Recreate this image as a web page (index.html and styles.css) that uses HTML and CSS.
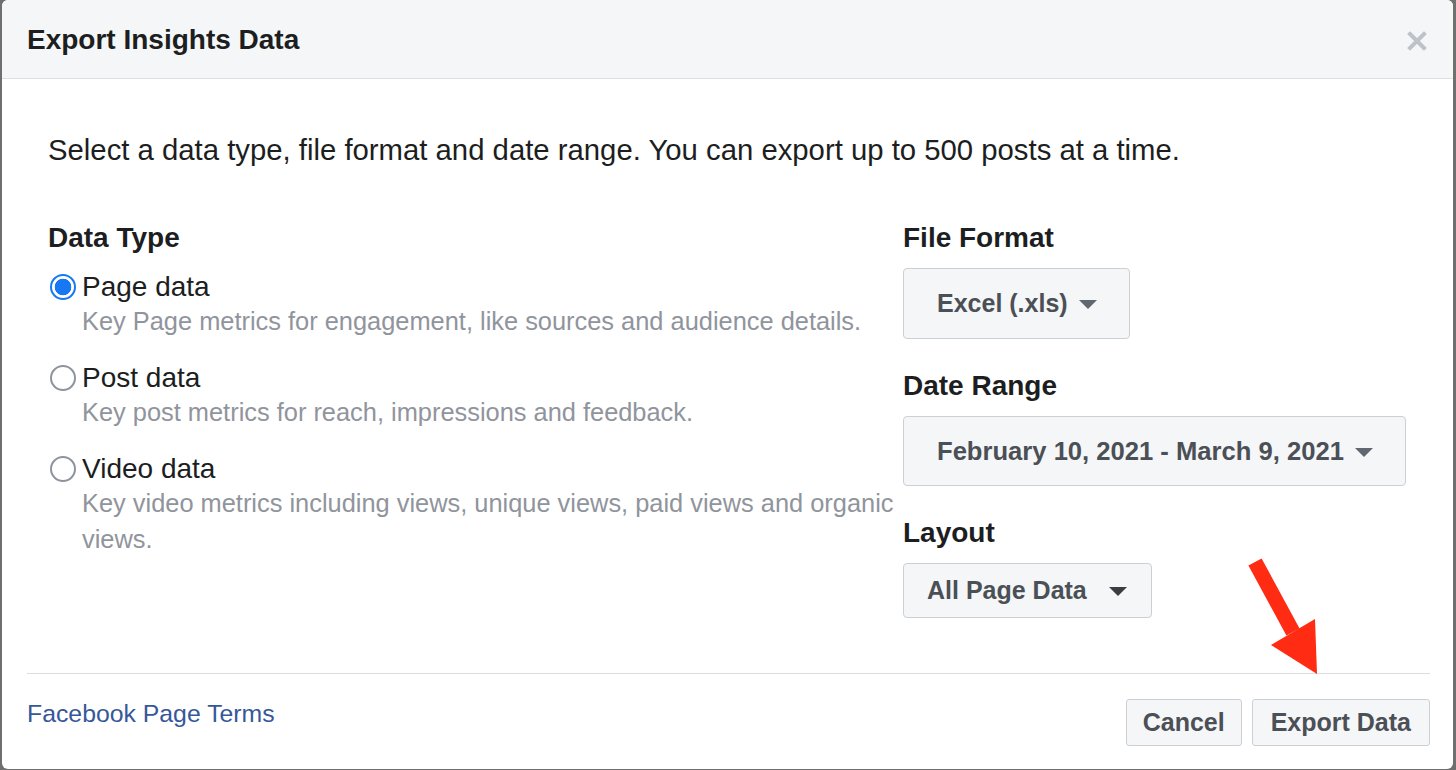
FILE: index.html
```html
<!DOCTYPE html>
<html lang="en">
<head>
<meta charset="utf-8">
<title>Export Insights Data</title>
<link rel="stylesheet" href="styles.css">
</head>
<body>
<div class="dialog">
  <div class="header">
    <div class="title">Export Insights Data</div>
    <svg class="close" width="20" height="20" viewBox="0 0 20 20"><path d="M3 3 L17 17 M17 3 L3 17" stroke="#bec3c9" stroke-width="4" stroke-linecap="square"/></svg>
  </div>
  <div class="body">
    <div class="intro">Select a data type, file format and date range. You can export up to 500 posts at a time.</div>
    <div class="columns">
      <div class="left">
        <div class="heading">Data Type</div>
        <div class="option">
          <div class="opt-row"><span class="radio checked"></span><span class="label">Page data</span></div>
          <div class="desc">Key Page metrics for engagement, like sources and audience details.</div>
        </div>
        <div class="option">
          <div class="opt-row"><span class="radio"></span><span class="label">Post data</span></div>
          <div class="desc">Key post metrics for reach, impressions and feedback.</div>
        </div>
        <div class="option">
          <div class="opt-row"><span class="radio"></span><span class="label">Video data</span></div>
          <div class="desc">Key video metrics including views, unique views, paid views and organic views.</div>
        </div>
      </div>
      <div class="right">
        <div class="heading">File Format</div>
        <div class="select sel-format">Excel (.xls)<span class="caret"></span></div>
        <div class="heading">Date Range</div>
        <div class="select sel-range">February 10, 2021 - March 9, 2021<span class="caret"></span></div>
        <div class="heading">Layout</div>
        <div class="select sel-layout">All Page Data<span class="caret dark"></span></div>
      </div>
    </div>
  </div>
  <div class="footer">
    <a class="terms" href="#">Facebook Page Terms</a>
    <div class="buttons">
      <button class="btn btn-cancel">Cancel</button>
      <button class="btn btn-export">Export Data</button>
    </div>
  </div>
  <svg class="arrow" width="90" height="130" viewBox="0 0 90 130"><path d="M8 6 L46 76" stroke="#ff2b12" stroke-width="15" stroke-linecap="butt"/><polygon points="24,89 68,63 70,118" fill="#ff2b12"/></svg>
</div>
</body>
</html>
```
FILE: styles.css
```css
* { box-sizing: border-box; }
html, body { margin: 0; padding: 0; }
body {
  width: 1456px;
  height: 770px;
  background: #6f6f6f;
  font-family: "Liberation Sans", Arial, sans-serif;
  color: #1c1e21;
  overflow: hidden;
  padding: 0 3px 0 2px;
}
.dialog {
  position: relative;
  height: 769px;
  background: #fff;
  border-radius: 6px;
  display: flex;
  flex-direction: column;
  overflow: hidden;
}
.header {
  height: 79px;
  background: #f5f6f7;
  border-bottom: 1px solid #dddfe2;
  display: flex;
  align-items: center;
  justify-content: space-between;
  padding: 0 26px 0 25px;
  flex: none;
}
.title {
  font-size: 28px;
  font-weight: bold;
  line-height: 36px;
  margin-top: 2px;
}
.close { display: block; margin-top: 3px; }
.body {
  padding: 53px 0 0 46px;
  flex: 1;
}
.intro {
  font-size: 29.3px;
  line-height: 36px;
}
.columns {
  display: flex;
  margin-top: 52px;
}
.left { width: 855px; flex: none; }
.heading {
  font-size: 28px;
  font-weight: bold;
  line-height: 36px;
}
.option { margin-top: 14px; }
.option + .option { margin-top: 22px; }
.opt-row {
  display: flex;
  align-items: center;
  height: 34px;
}
.radio {
  width: 26px;
  height: 26px;
  border-radius: 50%;
  border: 2px solid #8d949e;
  margin: 0 6px 0 2px;
  flex: none;
  background: #fff;
}
.radio.checked {
  border: 2px solid #1877f2;
  background: radial-gradient(circle, #1877f2 0 8px, #fff 8.6px);
}
.label {
  font-size: 28px;
}
.desc {
  font-size: 25.4px;
  line-height: 36px;
  color: #90949c;
  padding-left: 34px;
  width: 850px;
  margin-top: -1px;
}
.right {
  display: flex;
  flex-direction: column;
  align-items: flex-start;
}
.select {
  margin-top: 12px;
  margin-bottom: 29px;
  height: 71px;
  background: #f5f6f7;
  border: 1px solid #ccd0d5;
  border-radius: 4px;
  display: flex;
  align-items: center;
  font-size: 25px;
  font-weight: bold;
  color: #4b4f56;
  padding: 0 32px 0 33px;
}
.sel-range { height: 70px; font-size: 25.6px; }
.sel-layout {
  height: 55px;
  padding: 0 24px 0 23px;
  margin-bottom: 0;
}
.caret {
  width: 0;
  height: 0;
  border-left: 9px solid transparent;
  border-right: 9px solid transparent;
  border-top: 9px solid #606770;
  margin-left: 11px;
  margin-top: 2px;
}
.caret.dark { border-top-color: #3a3d42; margin-left: 22px; }
.footer {
  margin: 0 23px 0 25px;
  border-top: 1px solid #dadde1;
  height: 96px;
  display: flex;
  justify-content: space-between;
  align-items: flex-start;
  flex: none;
}
.terms {
  font-size: 24.8px;
  color: #365899;
  text-decoration: none;
  line-height: 30px;
  margin-top: 25px;
}
.buttons {
  display: flex;
  gap: 10px;
  margin-top: 25px;
}
.btn {
  height: 47px;
  background: #f5f6f7;
  border: 1px solid #ccd0d5;
  border-radius: 3px;
  font-family: "Liberation Sans", Arial, sans-serif;
  font-size: 25px;
  font-weight: bold;
  color: #4b4f56;
  padding: 0 16px;
}
.btn-export { padding: 0 18px; }
.arrow {
  position: absolute;
  left: 1245px;
  top: 556px;
}
```
